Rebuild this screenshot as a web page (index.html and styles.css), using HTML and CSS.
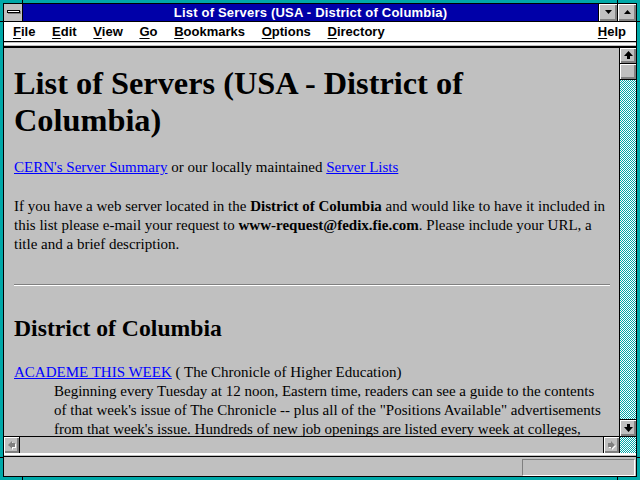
FILE: index.html
```html
<!DOCTYPE html>
<html>
<head>
<meta charset="utf-8">
<title>List of Servers (USA - District of Columbia)</title>
<link rel="stylesheet" href="styles.css">
</head>
<body>
<div class="window">
  <div class="frame">
    <div class="titlebar">
      <div class="sysbox"><span class="sysbar"></span></div>
      <div class="title">List of Servers (USA - District of Columbia)</div>
      <div class="tbtn"><svg width="9" height="5" viewBox="0 0 9 5"><path d="M1 0h7L4.5 4z" fill="#000"/></svg></div>
      <div class="tbtn last"><svg width="9" height="5" viewBox="0 0 9 5"><path d="M1 4h7L4.5 0z" fill="#000"/></svg></div>
    </div>
    <div class="menubar">
      <span class="mi"><u>F</u>ile</span>
      <span class="mi"><u>E</u>dit</span>
      <span class="mi"><u>V</u>iew</span>
      <span class="mi"><u>G</u>o</span>
      <span class="mi"><u>B</u>ookmarks</span>
      <span class="mi"><u>O</u>ptions</span>
      <span class="mi"><u>D</u>irectory</span>
      <span class="mi help"><u>H</u>elp</span>
    </div>
    <div class="strip"></div>
    <div class="main">
      <div class="doc">
        <h1>List of Servers (USA - District of Columbia)</h1>
        <p><a href="#">CERN's Server Summary</a> or our locally maintained <a href="#">Server Lists</a></p>
        <p>If you have a web server located in the <b>District of Columbia</b> and would like to have it included in<br>this list please e-mail your request to <b>www-request@fedix.fie.com</b>. Please include your URL, a<br>title and a brief description.</p>
        <hr>
        <h2>District of Columbia</h2>
        <dl>
          <dt><a href="#">ACADEME THIS WEEK</a> ( The Chronicle of Higher Education)</dt>
          <dd>Beginning every Tuesday at 12 noon, Eastern time, readers can see a guide to the contents<br>of that week's issue of The Chronicle -- plus all of the "Positions Available" advertisements<br>from that week's issue. Hundreds of new job openings are listed every week at colleges,</dd>
        </dl>
      </div>
      <div class="vscroll">
        <div class="sbtn"><svg width="9" height="9" viewBox="0 0 9 9"><path d="M4.5 0L9 5H6v3H3V5H0z" fill="#000"/></svg></div>
        <div class="sbtn"></div>
        <div class="track"></div>
        <div class="sbtn down"><svg width="9" height="9" viewBox="0 0 9 9"><path d="M3 0h3v3h3L4.5 8 0 3h3z" fill="#000"/></svg></div>
      </div>
      <div class="hscroll">
        <div class="hbtn left"><svg width="10" height="10" viewBox="0 0 10 10"><path d="M1 5L5 1v2h3v4H5v2z" fill="#fff" transform="translate(1 1)"/><path d="M1 5L5 1v2h3v4H5v2z" fill="#808080"/></svg></div>
        <div class="htrack"></div>
        <div class="hbtn right"><svg width="10" height="10" viewBox="0 0 10 10"><path d="M8 5L4 1v2H1v4h3v2z" fill="#fff" transform="translate(1 1)"/><path d="M8 5L4 1v2H1v4h3v2z" fill="#808080"/></svg></div>
      </div>
      <div class="corner"></div>
    </div>
    <div class="strip2"></div>
    <div class="status"><div class="statbox"></div></div>
  </div>
  <span class="tick tv t1"></span>
  <span class="tick tv t2"></span>
  <span class="tick tv t3"></span>
  <span class="tick tv t4"></span>
  <span class="tick th t5"></span>
  <span class="tick th t6"></span>
  <span class="tick th t7"></span>
  <span class="tick th t8"></span>
</div>
</body>
</html>
```
FILE: styles.css
```css
html, body {
  margin: 0;
  padding: 0;
  background: #00a8a8;
}
.window {
  position: relative;
  width: 640px;
  height: 480px;
  box-sizing: border-box;
  border: 3px solid #00a8a8;
  background: #00a8a8;
}
.frame {
  box-sizing: border-box;
  width: 634px;
  height: 474px;
  border: 1px solid #000;
  display: flex;
  flex-direction: column;
  background: #c0c0c0;
}
.titlebar {
  height: 17px;
  border-bottom: 1px solid #000;
  display: flex;
  flex: none;
}
.sysbox {
  width: 18px;
  background: #c0c0c0;
  border-right: 1px solid #000;
  display: flex;
  align-items: center;
  justify-content: center;
}
.sysbar {
  display: block;
  width: 11px;
  height: 1px;
  border: 1px solid #000;
  background: #fff;
  box-shadow: 1px 1px 0 #808080;
  margin-top: -2px;
}
.title {
  flex: 1;
  background: #0000a8;
  color: #fff;
  font-family: "Liberation Sans", Arial, sans-serif;
  font-weight: bold;
  font-size: 13px;
  letter-spacing: 0.2px;
  line-height: 17px;
  text-align: center;
  white-space: nowrap;
}
.tbtn {
  width: 18px;
  border-left: 1px solid #000;
  background: #c0c0c0;
  box-shadow: inset 1px 1px #fff, inset -1px -1px #808080, inset -2px -2px #808080;
  display: flex;
  align-items: center;
  justify-content: center;
}
.menubar {
  height: 19px;
  border-bottom: 1px solid #000;
  background: #fff;
  display: flex;
  flex: none;
  padding-left: 9px;
  font-family: "Liberation Sans", Arial, sans-serif;
  font-weight: bold;
  font-size: 13px;
  line-height: 19px;
  color: #000;
}
.mi {
  margin-right: 16.7px;
}
.mi u {
  text-decoration: underline;
  text-underline-offset: 2px;
}
.help {
  margin-left: auto;
  margin-right: 10px;
}
.strip {
  flex: none;
  box-sizing: border-box;
  height: 6px;
  border-top: 1px solid #c0c0c0;
  background-color: #fff;
  border-bottom: 2px solid #000;
  box-shadow: inset 0 -1px #c0c0c0;
}
.main {
  flex: none;
  height: 405px;
  display: grid;
  grid-template-columns: 615px 17px;
  grid-template-rows: 388px 17px;
}
.doc {
  overflow: hidden;
  padding: 0 9px 0 10px;
  font-family: "Liberation Serif", "Times New Roman", serif;
  font-size: 15px;
  line-height: 19px;
  color: #000;
}
.doc a {
  color: #0000ff;
  text-decoration: underline;
}
.doc h1 {
  font-size: 32.35px;
  line-height: 37px;
  margin: 17px 0 19px;
  width: 470px;
}
.doc p {
  margin: 0 0 20px;
}
.doc hr {
  margin: 30px 0 28px;
  border: 0;
  border-top: 1px solid #808080;
  border-bottom: 1px solid #fff;
  height: 0;
}
.doc h2 {
  font-size: 23.7px;
  line-height: 28px;
  margin: 0 0 21px;
}
.doc dl {
  margin: 0;
}
.doc dd {
  margin-left: 40px;
}
.vscroll {
  border-left: 1px solid #000;
  display: flex;
  flex-direction: column;
  background-color: #00a8a8;
  background-image: conic-gradient(#ffffff 25%, transparent 0 50%, #ffffff 0 75%, transparent 0);
  background-size: 2px 2px;
}
.sbtn {
  height: 15px;
  flex: none;
  border-bottom: 1px solid #000;
  background: #c0c0c0;
  box-shadow: inset 1px 1px #fff, inset -1px -1px #808080, inset -2px -2px #808080;
  display: flex;
  align-items: center;
  justify-content: center;
}
.sbtn.down {
  border-bottom: 0;
  border-top: 1px solid #000;
  height: 16px;
}
.track {
  flex: 1;
}
.hscroll {
  border-top: 1px solid #000;
  display: flex;
  background: #c0c0c0;
}
.hbtn {
  width: 15px;
  background: #c0c0c0;
  box-shadow: inset 1px 1px #fff, inset -1px -1px #808080, inset -2px -2px #808080;
  display: flex;
  align-items: center;
  justify-content: center;
}
.hbtn.left {
  border-right: 1px solid #000;
}
.hbtn.right {
  border-left: 1px solid #000;
}
.htrack {
  flex: 1;
}
.corner {
  border-top: 1px solid #000;
  border-left: 1px solid #000;
  background-color: #00a8a8;
  background-image: conic-gradient(#ffffff 25%, transparent 0 50%, #ffffff 0 75%, transparent 0);
  background-size: 2px 2px;
}
.strip2 {
  flex: none;
  box-sizing: border-box;
  height: 4px;
  border-top: 2px solid #fff;
  background: #c0c0c0;
  border-bottom: 1px solid #000;
}
.status {
  flex: 1;
  display: flex;
  justify-content: flex-end;
  align-items: flex-end;
}
.statbox {
  width: 113px;
  height: 17px;
  box-sizing: border-box;
  margin-right: 1px;
  border-top: 1px solid #808080;
  border-left: 1px solid #808080;
  border-bottom: 1px solid #fff;
  border-right: 1px solid #fff;
}
.tick {
  position: absolute;
  background: #000;
}
.tv {
  width: 1px;
  height: 3px;
}
.th {
  width: 3px;
  height: 1px;
}
.t1 { left: 19px; top: -3px; }
.t2 { left: 614px; top: -3px; }
.t3 { left: 19px; bottom: -3px; }
.t4 { left: 614px; bottom: -3px; }
.t5 { left: -3px; top: 18px; }
.t6 { right: -3px; top: 18px; }
.t7 { left: -3px; bottom: 19px; }
.t8 { right: -3px; bottom: 19px; }
```
